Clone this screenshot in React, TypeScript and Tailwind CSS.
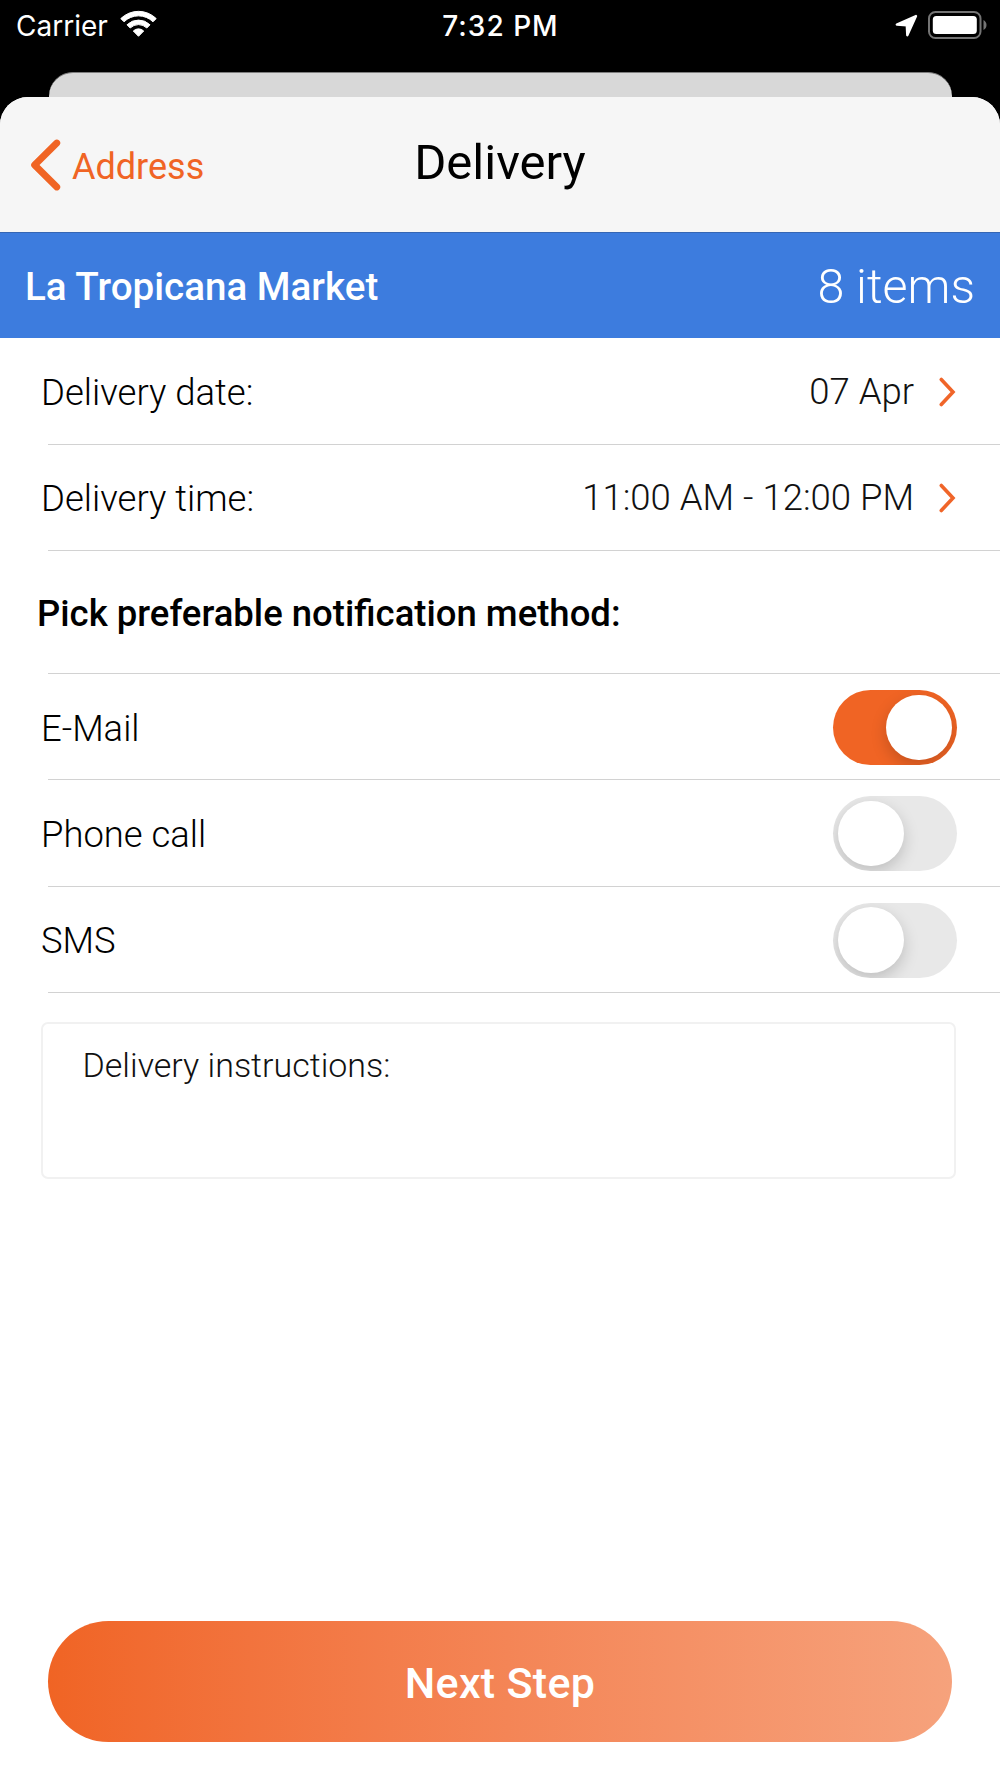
import { useState } from 'react';

const notificationMethods = [
  { id: 'email', label: 'E-Mail', height: 'h-[105px] pt-0.5' },
  { id: 'phone', label: 'Phone call', height: 'h-[106px] pt-px' },
  { id: 'sms', label: 'SMS', height: 'h-[105px] pt-px' },
];

function Divider() {
  return <div className="ml-12 h-px bg-[#d2d2d2]" />;
}

function StatusBar() {
  return (
    <div className="grid h-[50px] grid-cols-3 items-center pl-4 pr-[13px] font-['Inter',sans-serif] text-[28px] text-white">
      <div className="flex items-center gap-[12px]">
        <span className="pt-px">Carrier</span>
        <svg className="mb-0.5" width="37" height="28" viewBox="0 0 37 28" fill="#fff" stroke="#fff" strokeWidth="1" strokeLinejoin="round">
          <path d="M.8 8.6a25.2 25.2 0 0 1 35.4 0l-3.2 3.2a20.7 20.7 0 0 0-29 0z" />
          <path d="M7 14.8a16.4 16.4 0 0 1 23 0l-3.2 3.2a11.8 11.8 0 0 0-16.6 0z" />
          <path d="M13.3 21a7.4 7.4 0 0 1 10.4 0l-5.2 5.3z" />
        </svg>
      </div>
      <span className="pr-0.5 pt-px text-center font-medium tracking-[1px]">7:32 PM</span>
      <div className="flex items-center justify-end gap-[10px]">
        <svg width="23" height="23" viewBox="0 0 23 23" fill="#fff" stroke="#fff" strokeWidth="2.4" strokeLinejoin="round">
          <path d="M21 2 1.8 10.6l10 .6.5 10z" />
        </svg>
        <svg className="mb-px" width="59" height="28" viewBox="0 0 59 28">
          <rect x="1" y="1" width="51.5" height="26" rx="6.5" fill="none" stroke="#747474" strokeWidth="2" />
          <rect x="4.8" y="5" width="44" height="18" rx="3.5" fill="#fff" />
          <path d="M55.5 9c4 2 4 8 0 10z" fill="#747474" />
        </svg>
      </div>
    </div>
  );
}

function DetailRow({ label, value, height }: { label: string; value: string; height: string }) {
  return (
    <div className={`flex items-center justify-between pl-[41px] pr-[44px] text-[36.5px] font-light ${height}`}>
      <span className="pt-1 text-black">{label}</span>
      <div className="flex items-center gap-[24px] text-[#111]">
        <span className="pt-0.5">{value}</span>
        <svg className="mt-px" width="18" height="30" viewBox="0 0 18 30" fill="none" stroke="#f06529" strokeWidth="3.6" strokeLinecap="round">
          <path d="M3.3 2.5 15 15 3.3 27.5" />
        </svg>
      </div>
    </div>
  );
}

function Toggle({ on, onClick }: { on: boolean; onClick: () => void }) {
  return (
    <button
      onClick={onClick}
      className={`flex h-[75px] w-[123.5px] items-center overflow-hidden rounded-full px-[5px] ${
        on ? 'justify-end bg-[#f06424]' : 'justify-start bg-[#e8e8e8]'
      }`}
    >
      <span className="size-[65.5px] rounded-full bg-white shadow-[0_6px_16px_rgba(0,0,0,0.18)]" />
    </button>
  );
}

export default function App() {
  const [method, setMethod] = useState('email');

  return (
    <main className="flex h-[1778px] w-[1000px] flex-col overflow-hidden bg-black font-['Roboto',sans-serif]">
      <StatusBar />

      <div className="mx-[48.5px] mt-[22px] h-[25px] rounded-t-[24px] border-t border-[#7d7d7d] bg-[#d8d8d8]" />

      <div className="flex flex-1 flex-col overflow-hidden rounded-t-[28px] bg-white">
        <header className="grid h-[135px] grid-cols-3 items-center bg-[#f6f6f6] px-[30px]">
          <button className="flex items-center gap-[10px] pt-1 text-[36px] text-[#f06424]">
            <svg className="mb-1" width="32" height="52" viewBox="0 0 32 52" fill="none" stroke="#f06424" strokeWidth="6.8" strokeLinecap="round" strokeLinejoin="round">
              <path d="M26.8 4 4.6 26l22.2 22" />
            </svg>
            <span>Address</span>
          </button>
          <h1 className="pb-[3px] text-center text-[49px] text-black">Delivery</h1>
        </header>

        <section className="flex h-[106px] items-center justify-between border-t border-[#3566b4] bg-[#3d7cde] px-[25px] pt-[3px] text-white">
          <h2 className="text-[38.6px] font-medium">La Tropicana Market</h2>
          <span className="text-[48.4px] font-light">8 items</span>
        </section>

        <DetailRow label="Delivery date:" value="07 Apr" height="h-[106px]" />
        <Divider />
        <DetailRow label="Delivery time:" value="11:00 AM - 12:00 PM" height="h-[105px]" />
        <Divider />

        <h3 className="flex h-[122px] items-center pl-[37px] pt-1 text-[36.5px] font-medium text-black">
          Pick preferable notification method:
        </h3>
        <Divider />

        {notificationMethods.map((item) => (
          <div key={item.id}>
            <div className={`flex items-center justify-between pl-[41px] pr-[43.5px] ${item.height}`}>
              <span className="pt-[3px] text-[36.4px] font-light text-black">{item.label}</span>
              <Toggle on={method === item.id} onClick={() => setMethod(item.id)} />
            </div>
            <Divider />
          </div>
        ))}

        <div className="ml-[41px] mr-[44px] mt-[29px] h-[157px] rounded-[7px] border-2 border-[#f1f1f1] pl-[39.5px] pt-[21px] text-[34px] leading-[40px] font-light text-[#111]">
          Delivery instructions:
        </div>

        <button className="mx-[48px] mb-9 mt-auto h-[121px] rounded-full bg-linear-to-r from-[#f06424] to-[#f6a27c] pt-1 text-[43px] font-medium tracking-[0.3px] text-white">
          Next Step
        </button>
      </div>
    </main>
  );
}
